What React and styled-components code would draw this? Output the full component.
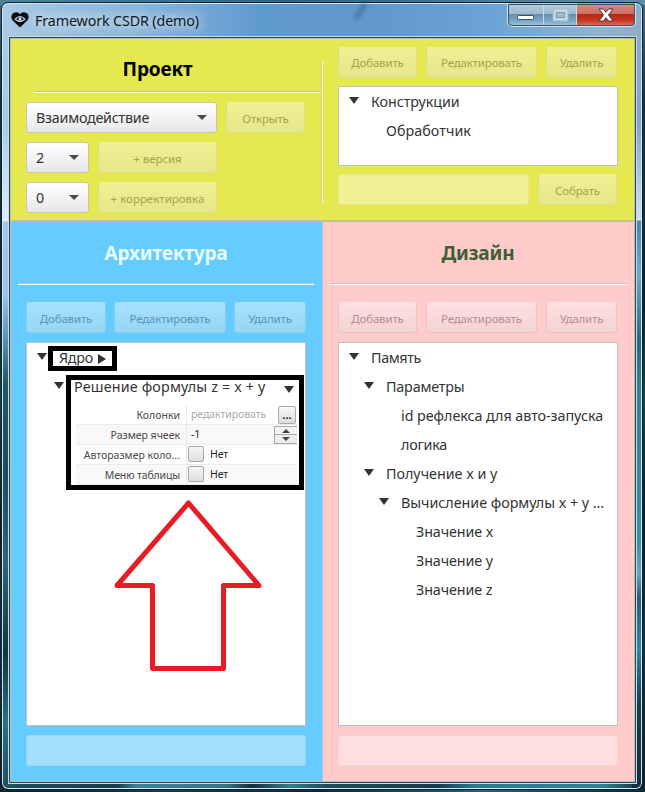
import React from 'react';
import styled, { createGlobalStyle, css } from 'styled-components';

const Global = createGlobalStyle`
  * { box-sizing: border-box; }
  body { margin: 0; overflow: hidden; }
`;

const themes = {
  project: { bg: '#e6e850', top: '#eff093', bottom: '#e6e78a', edge: '#dddd83', text: '#a2a44b', title: '#000', line: '#c9cb7c', field: '#f0f094' },
  architecture: { bg: '#66cbff', top: '#a5e0ff', bottom: '#97d6f6', edge: '#89cdee', text: '#5795b6', title: '#e9ffff', line: '#a9cfe3', field: '#a4dfff' },
  design: { bg: '#ffcbcb', top: '#ffdfdf', bottom: '#f4d3d3', edge: '#eac3c3', text: '#b58e8e', title: '#3b6135', line: '#dfbcbc', field: '#ffdfdf' },
};

const Desktop = styled.div`
  width: 645px;
  height: 792px;
  padding: 2px 2px 2px 1px;
  font-family: 'Noto Sans', sans-serif;
  background:
    linear-gradient(90deg, #4e8299, #31647e 45%, #5e8da7) 0 0 / 100% 5px no-repeat,
    linear-gradient(90deg, #0a222a, #123b47 25%, #0c2a36 50%, #1e6476 75%, #092633) 0 100% / 100% 6px no-repeat,
    linear-gradient(180deg, #437189, #173341 12%, #122e3c 27%, #09242c 38%, #0a4645 50%, #071f26 66%, #12313d 80%, #0b1f2c);
`;

const Window = styled.div`
  display: flex;
  flex-direction: column;
  width: 642px;
  height: 788px;
  padding: 0 6px 6px;
  border: 1px solid #10222e;
  border-radius: 7px;
  box-shadow: inset 0 0 0 1px #d5e8f3;
  background:
    linear-gradient(180deg, #a9c9e4 0, #a6cbea 120px, #dbe9f4 205px, #e1edf6 218px, #9fc7ea 219px, #9cc4e6 290px, #558eac 340px, #285563 380px, #1e4b5a 470px, #2d6675 560px, #123540 650px, #2a7080 720px, #1f505b) 0 0 / 10px 100% no-repeat,
    linear-gradient(180deg, #91aeca 0, #83a5c4 120px, #c4d3e1 195px, #d4dfe9 217px, #4d86ac 218px, #72a7cd 270px, #306680 340px, #35808f 375px, #3b91a5 540px, #6aa4c7 570px, #315b77 595px, #3188a7 645px, #1b3e53 700px, #132c43) 100% 0 / 10px 100% no-repeat,
    linear-gradient(90deg, #a9c9e3 0, #88b5dc 22%, #609bcf 40%, #6098cb 57%, #6ba3d5 76%, #8db3d4 93%, #91adc7) 0 0 / 100% 40px no-repeat,
    linear-gradient(90deg, #204e5c, #173e4b 18%, #378297 21%, #37748a 35%, #122d3b 39%, #327e91 45%, #1e4957 51%, #143c4a 68%, #287b91 74%, #2f8195 94%, #102b3b) 0 100% / 100% 10px no-repeat;
`;

const TitleBar = styled.header`
  display: flex;
  flex: 0 0 35px;
  align-items: flex-start;
`;

const TitleLabel = styled.div`
  display: flex;
  align-items: center;
  gap: 6px;
  height: 34px;
  margin-left: 3px;
  color: #101820;
  font-size: 14.3px;
  letter-spacing: -0.13px;
  white-space: nowrap;
  text-shadow: 0 0 8px #ffffffb0, 0 0 12px #ffffff90, 0 0 16px #ffffff70;
`;

const Reflection = styled.div`
  width: 5px;
  height: 22px;
  margin-left: 159px;
  margin-top: -3px;
  border-radius: 50%;
  background: #34516e80;
  filter: blur(2px);
  transform: rotate(32deg);
`;

const Controls = styled.div`
  display: flex;
  height: 24px;
  margin-left: auto;
  overflow: hidden;
  border: 1px solid #d2e3ef;
  border-top: 0;
  border-radius: 0 0 5px 5px;
  outline: 1px solid #38546c;
  outline-offset: -2px;
`;

const Control = styled.button`
  display: flex;
  align-items: center;
  justify-content: center;
  width: ${(p) => p.$width}px;
  height: 23px;
  padding: 0;
  border: 0;
  border-right: ${(p) => (p.$close ? 0 : '1px solid #cadbe8')};
  background: ${(p) => p.$close
    ? 'linear-gradient(180deg, #d99186, #cf6e60 46%, #b4281b 50%, #c43720 75%, #df7658)'
    : 'linear-gradient(180deg, #b8cee1, #9fbad1 46%, #688fac 50%, #7ca8ca 80%, #a6c8e1)'};
`;

const Client = styled.main`
  display: grid;
  grid-template-rows: 183px 1fr;
  flex: 1;
  margin: 0 0 1px 2px;
  width: 625px;
  border: 1px solid #b7bdae;
  outline: 1px solid #27475b;
  box-shadow: 0 0 0 2px #c6dce8;
`;

const ProjectPanel = styled.section`
  display: grid;
  grid-template-columns: 311px 1fr;
  border-bottom: 2px solid #bfc190;
  background: ${themes.project.bg};
`;

const BottomPanels = styled.div`
  display: grid;
  grid-template-columns: 312px 1fr;
`;

const Panel = styled.section`
  display: flex;
  flex-direction: column;
  align-items: flex-start;
  padding-left: 15px;
  border-right: ${(p) => (p.$divided ? '1px solid #b4c4d2' : 0)};
  background: ${(p) => p.$theme.bg};
`;

const Heading = styled.h2`
  width: 280px;
  height: ${(p) => p.$height}px;
  margin: 0;
  padding-right: ${(p) => p.$shift || 0}px;
  color: ${(p) => p.$theme.title};
  font-size: 19px;
  font-weight: 700;
  letter-spacing: -0.15px;
  line-height: ${(p) => p.$height + 2}px;
  text-align: center;
`;

const Separator = styled.div`
  width: ${(p) => p.$width}px;
  height: 2px;
  margin: 0 0 ${(p) => p.$below}px ${(p) => p.$left}px;
  border-top: 1px solid ${(p) => p.$theme.line};
  background: #fffff0;
`;

const ProjectForm = styled.div`
  padding-left: 15px;
  padding-top: 7px;
`;

const Constructions = styled.div`
  position: relative;
  padding: 8px 0 0 16px;
`;

const VerticalRule = styled.div`
  position: absolute;
  left: -1px;
  top: 21px;
  width: 2px;
  height: 144px;
  border-left: 1px solid #d3d49a;
  background: #f5f5c6;
`;

const Row = styled.div`
  display: flex;
  gap: ${(p) => p.$gap || 9}px;
  margin-bottom: ${(p) => p.$below ?? 9}px;
`;

const Button = styled.button`
  width: ${(p) => p.$width}px;
  height: 31px;
  padding: ${(p) => p.$drop || 0}px 0 0;
  border: 1px solid ${(p) => p.$theme.edge};
  border-top-color: ${(p) => p.$theme.top};
  border-radius: 3px;
  background: linear-gradient(180deg, ${(p) => p.$theme.top}, ${(p) => p.$theme.bottom});
  color: ${(p) => p.$theme.text};
  font: 11.5px 'Noto Sans', sans-serif;
  letter-spacing: ${(p) => p.$track ?? -0.18}px;
  white-space: nowrap;
`;

const ComboBox = styled.div`
  display: flex;
  align-items: center;
  justify-content: space-between;
  width: ${(p) => p.$width}px;
  height: 31px;
  padding: 0 9px 1px;
  border: 1px solid #c9c9b0;
  border-radius: 3px;
  background: linear-gradient(180deg, #fff, #f4f4f4 50%, #e7e7e7);
  color: #333;
  font-size: 14.3px;
  letter-spacing: -0.24px;
`;

const Field = styled.div`
  width: ${(p) => p.$width}px;
  height: 31px;
  border: 1px solid ${(p) => p.$theme.edge}80;
  border-radius: 3px;
  background: ${(p) => p.$theme.field};
`;

const Tree = styled.div`
  position: relative;
  width: 280px;
  height: ${(p) => p.$height}px;
  margin-bottom: ${(p) => p.$below ?? 9}px;
  border: 1px solid #bec0c0;
  background: #fff;
`;

const TreeRow = styled.div`
  display: flex;
  align-items: center;
  height: 29px;
  padding-left: ${(p) => 10 + p.$indent}px;
  color: #333;
  font-size: 14.3px;
  white-space: nowrap;
`;

const Toggle = styled.span`
  display: flex;
  flex: none;
  width: 10px;
  margin: -3px ${(p) => p.$gap ?? 12}px 0 0;
`;

const Label = styled.span`
  letter-spacing: ${(p) => p.$track || 0}px;
`;

const CollapsedMark = styled.svg`
  margin: 2px 0 0 5px;
`;

const PropertyTable = styled.div`
  display: grid;
  grid-auto-rows: 20px;
  width: 221px;
  margin: 4px 0 0 49px;
  color: #4a4a4a;
  font-size: 10.5px;
`;

const Property = styled.div`
  display: grid;
  grid-template-columns: 111px 1fr;
  border-bottom: 1px solid #ececec;
  background: ${(p) => (p.$shaded ? '#f8f8f8' : '#fff')};
`;

const PropertyName = styled.div`
  padding-right: 6px;
  border-right: 1px solid #e6e6e6;
  line-height: 21px;
  text-align: right;
  letter-spacing: ${(p) => p.$track || 0}px;
`;

const PropertyValue = styled.div`
  display: flex;
  align-items: center;
  justify-content: ${(p) => (p.$spread ? 'space-between' : 'flex-start')};
  gap: 6px;
  height: 19px;
  padding-left: ${(p) => (p.$spread ? 4 : 1)}px;
  padding-bottom: ${(p) => (p.$spread ? 0 : 1)}px;
  color: ${(p) => (p.$muted ? '#aaa' : '#222')};
  line-height: 19px;
  letter-spacing: -0.08px;
`;

const raised = css`
  border: 1px solid #aaa;
  background: linear-gradient(180deg, #f7f7f7, #dedede);
`;

const MoreButton = styled.button`
  ${raised}
  width: 18px;
  height: 18px;
  margin-right: 1px;
  padding: 0;
  border-radius: 2px;
  color: #222;
  font: 700 11px/12px 'Noto Sans', sans-serif;
`;

const CheckBox = styled.span`
  ${raised}
  width: 16px;
  height: 16px;
  border-radius: 2px;
`;

const Spinner = styled.div`
  ${raised}
  display: grid;
  grid-template-rows: 1fr 1fr;
  place-items: center;
  width: 23px;
  height: 18px;
  border-right: 0;
  background: linear-gradient(180deg, #f3f3f3 0 7px, #aaa 7px 8px, #ececec 8px);
  & > svg { display: block; }
`;

const Highlight = styled.div`
  position: absolute;
  left: ${(p) => p.$x}px;
  top: ${(p) => p.$y}px;
  width: ${(p) => p.$w}px;
  height: ${(p) => p.$h}px;
  border: 5px solid #000;
`;

const DropMark = styled.div`
  position: absolute;
  left: 257px;
  top: 43px;
  display: flex;
`;

const PointerArrow = styled.svg`
  position: absolute;
  left: 85px;
  top: 154px;
`;

const Down = ({ color = '#333', w = 10, h = 7 }) => (
  <svg width={w} height={h} viewBox="0 0 10 7" preserveAspectRatio="none">
    <path d="M0 0H10L5 7Z" fill={color} />
  </svg>
);

const Combo = ({ width, children }) => (
  <ComboBox $width={width}>
    {children}
    <Down color="#4a4a4a" h={5} />
  </ComboBox>
);

const Node = ({ level = 0, leaf, track, children }) => (
  <TreeRow $indent={level * 15}>
    <Toggle>{!leaf && <Down />}</Toggle>
    <Label $track={track}>{children}</Label>
  </TreeRow>
);

const EditButtons = ({ theme, wide, below, drop }) => (
  <Row $gap={wide ? 8 : 9} $below={below}>
    <Button $theme={theme} $drop={drop} $width={wide ? 80 : 79}>Добавить</Button>
    <Button $theme={theme} $drop={drop} $width={wide ? 112 : 111}>Редактировать</Button>
    <Button $theme={theme} $drop={drop} $width={wide ? 72 : 71}>Удалить</Button>
  </Row>
);

const HeartEye = () => (
  <svg width="18" height="16" viewBox="0 0 18 16">
    <path d="M9 15.5 2 8.7C-.4 6.2.1 2.5 2.5 1.1 5-.4 7.7.3 9 2.5 10.3.3 13-.4 15.500 1.100 17.900 2.500 18.400 6.200 16 8.700Z" fill="#080b0e" />
    <path d="M4.200 7.200Q9 2 13.800 7.200 9 11.800 4.200 7.200Z" fill="none" stroke="#c4dae7" strokeWidth="1.200" />
    <circle cx="9" cy="7" r="1.500" fill="#dcebf4" />
  </svg>
);

export default function App() {
  const { project, architecture, design } = themes;
  return (
    <Desktop>
      <Global />
      <Window>
        <TitleBar>
          <TitleLabel><HeartEye />Framework CSDR (demo)</TitleLabel>
          <Reflection />
          <Controls>
            <Control $width={36} aria-label="minimize">
              <svg width="17" height="15"><rect x=".5" y="8.5" width="16" height="4" rx="1" fill="#fff" stroke="#3c5264" /></svg>
            </Control>
            <Control $width={33} aria-label="maximize">
              <svg width="17" height="14"><rect x="1" y="1" width="15" height="12" fill="#c5d7e4" stroke="#a6bccd" /><rect x="4.5" y="4.5" width="8" height="5" fill="#a4bccd" stroke="#8198aa" /></svg>
            </Control>
            <Control $width={58} $close aria-label="close">
              <svg width="16" height="14" viewBox="0 0 16 14"><path d="M1 1H5.5L8 4.2 10.5 1H15L10.5 7 15 13H10.5L8 9.8 5.5 13H1L5.5 7Z" fill="#fff" stroke="#4b3843" /></svg>
            </Control>
          </Controls>
        </TitleBar>

        <Client>
          <ProjectPanel>
            <ProjectForm>
              <Heading $theme={project} $height={45} $shift={17}>Проект</Heading>
              <Separator $theme={project} $width={288} $left={8} $below={9} />
              <Row>
                <Combo width={191}>Взаимодействие</Combo>
                <Button $theme={project} $width={79} $drop={2}>Открыть</Button>
              </Row>
              <Row>
                <Combo width={63}>2</Combo>
                <Button $theme={project} $width={119} $drop={2} $track={-0.05}>+ версия</Button>
              </Row>
              <Row>
                <Combo width={63}>0</Combo>
                <Button $theme={project} $width={119} $drop={2} $track={0}>+ корректировка</Button>
              </Row>
            </ProjectForm>
            <Constructions>
              <VerticalRule />
              <EditButtons theme={project} below={8} />
              <Tree $height={80} $below={8}>
                <Node track={-0.06}>Конструкции</Node>
                <Node level={1} leaf track={0.05}>Обработчик</Node>
              </Tree>
              <Row>
                <Field $theme={project} $width={191} />
                <Button $theme={project} $width={79} $drop={1} $track={-0.13}>Собрать</Button>
              </Row>
            </Constructions>
          </ProjectPanel>

          <BottomPanels>
            <Panel $theme={architecture} $divided>
              <Heading $theme={architecture} $height={61}>Архитектура</Heading>
              <Separator $theme={architecture} $width={296} $left={-8} $below={17} />
              <EditButtons theme={architecture} wide drop={2} />
              <Tree $height={384}>
                <TreeRow $indent={0}>
                  <Toggle><Down /></Toggle>
                  <Label $track={-0.25}>Ядро</Label>
                  <CollapsedMark width="8" height="10"><path d="M0 0V10L8 5Z" fill="#333" /></CollapsedMark>
                </TreeRow>
                <TreeRow $indent={17}>
                  <Toggle $gap={10}><Down /></Toggle>
                  <Label $track={0.17}>Решение формулы z = x + y</Label>
                </TreeRow>
                <PropertyTable>
                  <Property>
                    <PropertyName>Колонки</PropertyName>
                    <PropertyValue $spread $muted>редактировать<MoreButton>...</MoreButton></PropertyValue>
                  </Property>
                  <Property $shaded>
                    <PropertyName>Размер ячеек</PropertyName>
                    <PropertyValue $spread>-1<Spinner>
                      <svg width="8" height="4"><path d="M0 4H8L4 0Z" fill="#444" /></svg>
                      <Down color="#444" w={8} h={4} />
                    </Spinner></PropertyValue>
                  </Property>
                  <Property>
                    <PropertyName>Авторазмер коло...</PropertyName>
                    <PropertyValue><CheckBox />Нет</PropertyValue>
                  </Property>
                  <Property $shaded>
                    <PropertyName $track={-0.15}>Меню таблицы</PropertyName>
                    <PropertyValue><CheckBox />Нет</PropertyValue>
                  </Property>
                </PropertyTable>
                <Highlight $x={21} $y={3} $w={69} $h={25} />
                <Highlight $x={39} $y={32} $w={238} $h={115} />
                <DropMark><Down /></DropMark>
                <PointerArrow width="152" height="178">
                  <path d="M76.5 6 147 88.5H111.5V171.5H40.5V88.5H5Z" fill="none" stroke="#e81c24" strokeWidth="5" strokeLinejoin="round" />
                </PointerArrow>
              </Tree>
              <Field $theme={architecture} $width={280} />
            </Panel>

            <Panel $theme={design}>
              <Heading $theme={design} $height={61}>Дизайн</Heading>
              <Separator $theme={design} $width={296} $left={-8} $below={17} />
              <EditButtons theme={design} drop={2} />
              <Tree $height={384}>
                <Node track={-0.35}>Память</Node>
                <Node level={1} track={-0.16}>Параметры</Node>
                <Node level={2} leaf track={-0.04}>id рефлекса для авто-запуска</Node>
                <Node level={2} leaf track={-0.2}>логика</Node>
                <Node level={1}>Получение x и y</Node>
                <Node level={2} track={-0.03}>Вычисление формулы x + y ...</Node>
                <Node level={3} leaf track={-0.1}>Значение x</Node>
                <Node level={3} leaf track={-0.1}>Значение y</Node>
                <Node level={3} leaf track={-0.1}>Значение z</Node>
              </Tree>
              <Field $theme={design} $width={280} />
            </Panel>
          </BottomPanels>
        </Client>
      </Window>
    </Desktop>
  );
}
